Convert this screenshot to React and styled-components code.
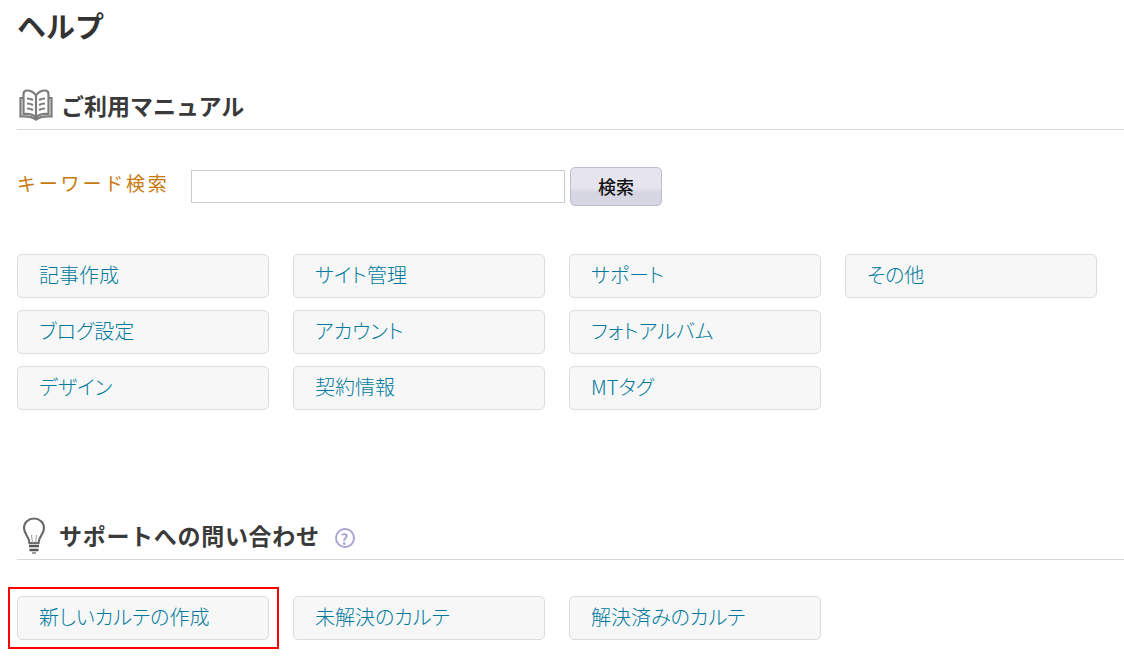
import React from "react";
import styled, { createGlobalStyle } from "styled-components";

const GlobalStyle = createGlobalStyle`
  html, body {
    margin: 0;
    padding: 0;
    background: #fff;
    overflow: hidden;
  }
  body {
    font-family: "Noto Sans CJK JP", "Liberation Sans", sans-serif;
  }
`;

const manualLinks = [
  ["記事作成", "ブログ設定", "デザイン"],
  ["サイト管理", "アカウント", "契約情報"],
  ["サポート", "フォトアルバム", "MTタグ"],
  ["その他"],
];

const BookIcon = () => (
  <svg width="34" height="32" viewBox="0 0 34 32" fill="none" stroke="#7c7c7c" strokeWidth="2.2">
    <path d="M17 6.500C15 3.500 11.500 1.500 8 1.500 5.500 1.500 4.500 3 4.500 5v20c4.500-.5 9.500 0 12.500 3.500 3-3.500 8-4 12.500-3.500V5c0-2-1-3.500-3.500-3.500-3.500 0-7 2-9 5z" />
    <path d="M17 6.500v22" />
    <path d="M4.500 9H1.500v18.500c6-.5 11.500 0 15.500 3 4-3 9.500-3.500 15.500-3V9h-3" />
    <path strokeWidth="2" d="M8 9.500c2 0 4 .5 6 1.500M8 14.500c2 0 4 .5 6 1.500M8 19.500c2 0 4 .5 6 1.500M26 9.500c-2 0-4 .5-6 1.500M26 14.500c-2 0-4 .5-6 1.500M26 19.500c-2 0-4 .5-6 1.500" />
  </svg>
);

const BulbIcon = () => (
  <svg width="24" height="37" viewBox="0 0 24 37" fill="none" stroke="#6a6a6a">
    <path strokeWidth="2.200" d="M7.500 26c0-6-5.500-9-5.500-15C2 5.500 6.500 1.500 12 1.500S22 5.500 22 11c0 6-5.500 9-5.500 15z" />
    <path strokeWidth="1" stroke="#999" d="M10.500 26l-1-8M13.500 26l1-8" />
    <path strokeWidth="2.400" stroke="#555" d="M7 29h10M7.500 33h9" />
    <path strokeWidth="1.600" stroke="#888" d="M10 36h4" />
  </svg>
);

const Page = styled.div`
  width: 1124px;
  height: 670px;
  box-sizing: border-box;
  padding-left: 17px;
  overflow: hidden;
`;

const Title = styled.h1`
  margin: 0;
  height: 50px;
  font-size: 29px;
  line-height: 50px;
  font-weight: 700;
  color: #333;
`;

const SectionHead = styled.h2`
  display: flex;
  align-items: center;
  box-sizing: border-box;
  height: ${(p) => p.$height}px;
  margin: ${(p) => p.$top}px 0 0;
  padding-top: ${(p) => p.$pad}px;
  border-bottom: 1px solid #d8d8d8;
  font-size: 23px;
  font-weight: 700;
  color: #3a3a3a;
  letter-spacing: ${(p) => p.$spacing}px;
`;

const HeadIcon = styled.span`
  display: flex;
  margin-left: ${(p) => p.$left}px;
  margin-right: ${(p) => p.$right}px;
`;

const Help = styled.span`
  display: flex;
  align-items: center;
  justify-content: center;
  box-sizing: border-box;
  width: 20px;
  height: 20px;
  margin: 6px 0 0 15px;
  border: 2.500px solid #aaa5d4;
  border-radius: 50%;
  font-size: 15px;
  font-weight: 700;
  color: #aaa5d4;
`;

const SearchRow = styled.form`
  display: flex;
  align-items: center;
  margin-top: 37px;
`;

const SearchLabel = styled.label`
  width: 174px;
  margin-bottom: 8px;
  font-size: 19px;
  letter-spacing: 2.800px;
  color: #c87a10;
`;

const SearchInput = styled.input`
  box-sizing: border-box;
  width: 374px;
  height: 33px;
  border: 1px solid #ccc;
  background: #fff;
`;

const SearchButton = styled.button`
  width: 92px;
  height: 39px;
  margin-left: 5px;
  padding: 0 0 2px;
  border: 1px solid #bdbbcf;
  border-radius: 5px;
  background: linear-gradient(#e6e5ee 0 52%, #d5d4e2 68%, #d8d7e4);
  font-family: inherit;
  font-size: 18px;
  font-weight: 500;
  color: #111;
`;

const LinkGrid = styled.div`
  display: flex;
  gap: 24px;
  margin-top: 48px;
`;

const LinkColumn = styled.div`
  display: flex;
  flex-direction: column;
  gap: 12px;
`;

const LinkButton = styled.a`
  display: flex;
  align-items: center;
  box-sizing: border-box;
  width: 252px;
  height: 44px;
  padding: 0 0 4px 21px;
  border: 1px solid #dcdcdc;
  border-radius: 5px;
  background: #f7f7f7;
  font-size: 20px;
  font-weight: 300;
  font-feature-settings: "palt";
  color: #007a9c;
`;

const SupportRow = styled.div`
  display: flex;
  gap: 24px;
  margin-top: 36px;
`;

const Highlight = styled.div`
  margin: -9px -10px -9px -9px;
  padding: 7px 8px 7px 7px;
  border: 2px solid #f00;
`;

export default function App() {
  return (
    <Page>
      <GlobalStyle />
      <Title>ヘルプ</Title>
      <SectionHead $height={80} $top={0} $pad={31} $spacing={0}>
        <HeadIcon $left={2} $right={8}>
          <BookIcon />
        </HeadIcon>
        ご利用マニュアル
      </SectionHead>
      <SearchRow>
        <SearchLabel>キーワード検索</SearchLabel>
        <SearchInput type="text" />
        <SearchButton type="button">検索</SearchButton>
      </SearchRow>
      <LinkGrid>
        {manualLinks.map((column) => (
          <LinkColumn key={column[0]}>
            {column.map((label) => (
              <LinkButton key={label}>{label}</LinkButton>
            ))}
          </LinkColumn>
        ))}
      </LinkGrid>
      <SectionHead $height={50} $top={100} $pad={1} $spacing={0.7}>
        <HeadIcon $left={5} $right={13}>
          <BulbIcon />
        </HeadIcon>
        サポートへの問い合わせ
        <Help>?</Help>
      </SectionHead>
      <SupportRow>
        <Highlight>
          <LinkButton>新しいカルテの作成</LinkButton>
        </Highlight>
        <LinkButton>未解決のカルテ</LinkButton>
        <LinkButton>解決済みのカルテ</LinkButton>
      </SupportRow>
    </Page>
  );
}
